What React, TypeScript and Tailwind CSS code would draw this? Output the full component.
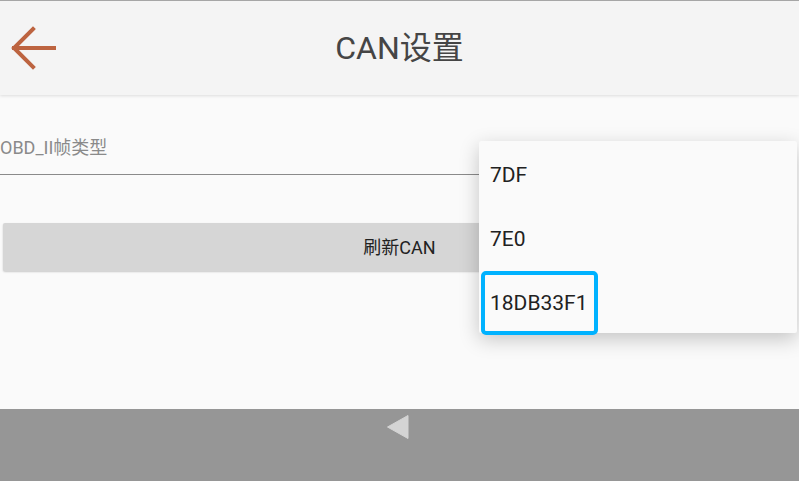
const font = "font-['Roboto','Noto_Sans_CJK_SC',sans-serif]";

const items = ["7DF", "7E0", "18DB33F1"];

export default function App() {
  return (
    <div className={`relative flex h-[481px] w-[799px] flex-col overflow-hidden bg-[#fafafa] ${font}`}>
      {/* toolbar */}
      <header className="relative z-10 flex h-[95px] items-center border-t border-[#a6a6a6] bg-[#f4f4f4] shadow-[0_1px_3px_rgba(0,0,0,0.12)]">
        <button className="ml-[10px] flex h-[46px] w-[46px] items-center justify-center">
          <svg width="46" height="46" viewBox="0 0 46 46" fill="none">
            <path
              d="M44 23H4M23 4L4 23L23 42"
              stroke="#bd6440"
              strokeWidth="4"
              strokeLinecap="square"
            />
          </svg>
        </button>
        <h1 className="absolute left-0 right-0 top-[28px] text-center text-[32px] leading-[38px] text-[#454545]">
          CAN设置
        </h1>
      </header>

      {/* content */}
      <main className="flex-1 pt-[39px]">
        <div className="w-[480px] border-b border-[#8a8a8a] pb-[12px] text-[18px] leading-[28px] text-[#8a8a8a]">
          OBD_II帧类型
        </div>
        <div className="px-[3px] pt-[48px]">
          <button className="flex h-[48px] w-full items-center justify-center rounded-[2px] bg-[#d6d6d6] text-[18px] text-[#222] shadow-[0_1px_2px_rgba(0,0,0,0.2)]">
            刷新CAN
          </button>
        </div>
      </main>

      {/* nav bar */}
      <nav className="flex h-[72px] justify-center bg-[#969696] pt-[5px]">
        <svg width="24" height="26" viewBox="0 0 24 26" className="ml-[-4px]">
          <path d="M22 1.5V24.5L1.5 13Z" fill="#d4d4d4" strokeLinejoin="round" stroke="#d4d4d4" strokeWidth="1" />
        </svg>
      </nav>

      {/* dropdown popup */}
      <div className="absolute left-[479px] top-[141px] h-[192px] w-[318px] rounded-[2px] bg-[#fafafa] pt-[3px] shadow-[0_6px_20px_rgba(0,0,0,0.22)]">
        {items.map((it) => (
          <div key={it} className="flex h-[64px] items-center pl-[11px] text-[21px] text-[#212121]">
            {it}
          </div>
        ))}
        <div className="absolute left-[2px] top-[130px] h-[64px] w-[117px] rounded-[5px] border-[4px] border-[#00b2ff]" />
      </div>
    </div>
  );
}
